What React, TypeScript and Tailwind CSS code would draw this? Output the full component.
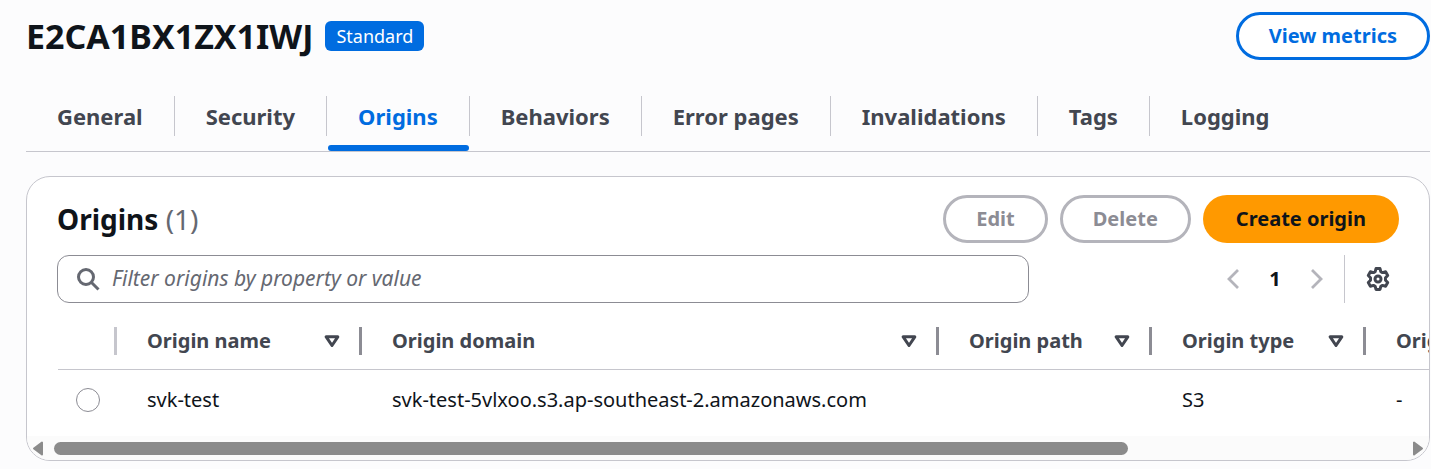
import { clsx } from "clsx";

const tabs = [
  "General",
  "Security",
  "Origins",
  "Behaviors",
  "Error pages",
  "Invalidations",
  "Tags",
  "Logging",
];

const columns = [
  { label: "Origin name", width: "w-[245px]" },
  { label: "Origin domain", width: "w-[577px]" },
  { label: "Origin path", width: "w-[213px]" },
  { label: "Origin type", width: "w-[214px]" },
  { label: "Origin Shield region", width: "w-[320px]" },
];

const origins = [
  ["svk-test", "svk-test-5vlxoo.s3.ap-southeast-2.amazonaws.com", "", "S3", "-"],
];

const SearchIcon = () => (
  <svg className="size-6 shrink-0" viewBox="0 0 24 24" fill="none" stroke="#656871" strokeWidth="3">
    <circle cx="10" cy="10" r="7.5" />
    <path d="M15.500 15.500l7 7" />
  </svg>
);

const Chevron = ({ flip = false }) => (
  <svg
    className={clsx("h-5 w-3", flip && "-scale-x-100")}
    viewBox="0 0 12 20"
    fill="none"
    stroke="#b4b4bb"
    strokeWidth="2.8"
  >
    <path d="M11 1L2 10l9 9" />
  </svg>
);

const GearIcon = () => (
  <svg
    className="size-6"
    viewBox="0 0 24 24"
    fill="none"
    stroke="#424650"
    strokeWidth="3"
    strokeLinejoin="round"
  >
    <path d="M10 1.600h4l.8 3 1.800 1 3-.8 2.100 3.700-2.200 2.200v2.600l2.200 2.200-2.100 3.700-3-.8-1.800 1-.8 3h-4l-.8-3-1.800-1-3 .8-2.100-3.700 2.200-2.200v-2.600L2.300 8.500l2.100-3.700 3 .8 1.800-1z" />
    <circle cx="12" cy="12" r="3" />
  </svg>
);

const SortIcon = () => (
  <svg
    className="h-3 w-4 shrink-0"
    viewBox="0 0 16 12"
    fill="none"
    stroke="#424650"
    strokeWidth="3"
    strokeLinejoin="round"
  >
    <path d="M2.200 1.800h11.600L8 10.500z" />
  </svg>
);

const ScrollArrow = ({ flip = false }) => (
  <svg
    className={clsx("h-4 w-3 shrink-0", flip && "-scale-x-100")}
    viewBox="0 0 12 16"
    fill="#8b8b8b"
    stroke="#8b8b8b"
    strokeWidth="2"
    strokeLinejoin="round"
  >
    <path d="M2 8.500l8-6v12z" />
  </svg>
);

const Tabs = () => (
  <nav className="mt-6 flex border-b border-[#c6c6cd]">
    {tabs.map((tab, i) => {
      const active = tab === "Origins";
      return (
        <button
          key={tab}
          className={clsx(
            "relative pt-3 pb-[15px] text-[22px] leading-10 font-bold",
            active ? "text-[#006ce0]" : "text-[#424650]",
          )}
        >
          <span
            className={clsx(
              "block border-[#c6c6cd] px-[31px]",
              i < tabs.length - 1 && "border-r",
            )}
          >
            {tab}
          </span>
          {active && (
            <span className="absolute right-px bottom-0 left-px h-[6px] rounded-full bg-[#006ce0]" />
          )}
        </button>
      );
    })}
  </nav>
);

const OriginsTable = () => (
  <div className="overflow-hidden pl-[31px]">
    <table className="w-[1627px] table-fixed text-left text-[20px] leading-7">
      <thead className="text-[#424650]">
        <tr className="border-b border-[#c6c6cd]">
          <th className="w-[59px] pt-3 pb-[14px]">
            <div className="h-7 border-r-[3px] border-[#c6c6cd]" />
          </th>
          {columns.map(({ label, width }) => (
            <th key={label} className={clsx("pt-3 pb-[14px] font-bold", width)}>
              <div className="flex h-7 items-center justify-between border-r-[3px] border-[#8c8c94] pr-[19px] pl-[30px] whitespace-nowrap">
                {label}
                <SortIcon />
              </div>
            </th>
          ))}
        </tr>
      </thead>
      <tbody className="text-[#0f141a]">
        {origins.map((cells) => (
          <tr key={cells[0]}>
            <td className="py-4">
              <input
                type="radio"
                name="origin"
                aria-label={cells[0]}
                className="ml-[18px] block size-6 appearance-none rounded-full border border-[#8c8c94]"
              />
            </td>
            {cells.map((cell, i) => (
              <td key={i} className="py-4 pl-[30px] whitespace-nowrap">
                {cell}
              </td>
            ))}
          </tr>
        ))}
      </tbody>
    </table>
  </div>
);

const App = () => (
  <div className="min-h-screen bg-[#fcfcfd] pt-3 pr-px pb-2 pl-[26px] font-['Noto_Sans',sans-serif]">
    <header className="flex items-center justify-between">
      <div className="flex items-center gap-3">
        <h1 className="text-[34px] leading-12 font-bold text-[#0f141a]">E2CA1BX1ZX1IWJ</h1>
        <span className="rounded-md bg-[#006ce0] px-[11px] text-[18px] leading-[30px] text-white">
          Standard
        </span>
      </div>
      <button className="h-12 rounded-full border-3 border-[#006ce0] bg-white px-[30px] text-[20px] font-bold text-[#006ce0]">
        View metrics
      </button>
    </header>

    <Tabs />

    <section className="mt-6 overflow-hidden rounded-3xl border border-[#c6c6cd] bg-white">
      <div className="flex items-center justify-between px-[30px] pt-[18px]">
        <h2 className="text-[28px] leading-12 font-bold text-[#0f141a]">
          Origins <span className="font-normal text-[#656871]">(1)</span>
        </h2>
        <div className="flex gap-3 text-[20px] font-bold">
          <button disabled className="h-12 rounded-full border-3 border-[#b4b4bb] px-[30px] text-[#8c8c94]">
            Edit
          </button>
          <button disabled className="h-12 rounded-full border-3 border-[#b4b4bb] px-[30px] text-[#8c8c94]">
            Delete
          </button>
          <button className="h-12 rounded-full bg-[#ff9900] px-[33px] text-[#0f141a]">
            Create origin
          </button>
        </div>
      </div>

      <div className="mt-3 flex items-center justify-between pr-[39px] pl-[30px]">
        <label className="flex h-12 w-[972px] items-center gap-3 rounded-xl border border-[#8c8c94] pl-[18px]">
          <SearchIcon />
          <input
            type="search"
            aria-label="Filter origins"
            placeholder="Filter origins by property or value"
            className="w-full bg-transparent text-[21px] outline-none placeholder:text-[#656871] placeholder:italic"
          />
        </label>
        <div className="flex items-center">
          <button disabled aria-label="Previous page">
            <Chevron />
          </button>
          <button className="w-[72px] text-[20px] font-bold text-[#0f141a]">1</button>
          <button disabled aria-label="Next page">
            <Chevron flip />
          </button>
          <div className="mx-[21px] h-12 border-l border-[#c6c6cd]" />
          <button aria-label="Preferences">
            <GearIcon />
          </button>
        </div>
      </div>

      <div className="mt-3">
        <OriginsTable />
      </div>

      <div className="mt-[6px] flex h-6 items-center justify-between bg-[#fbfbfb] px-[5px]">
        <ScrollArrow />
        <div className="flex-1 pr-4 pl-[10px]">
          <div className="h-[13px] w-4/5 rounded-full bg-[#8b8b8b]" />
        </div>
        <ScrollArrow flip />
      </div>
    </section>
  </div>
);

export default App;
